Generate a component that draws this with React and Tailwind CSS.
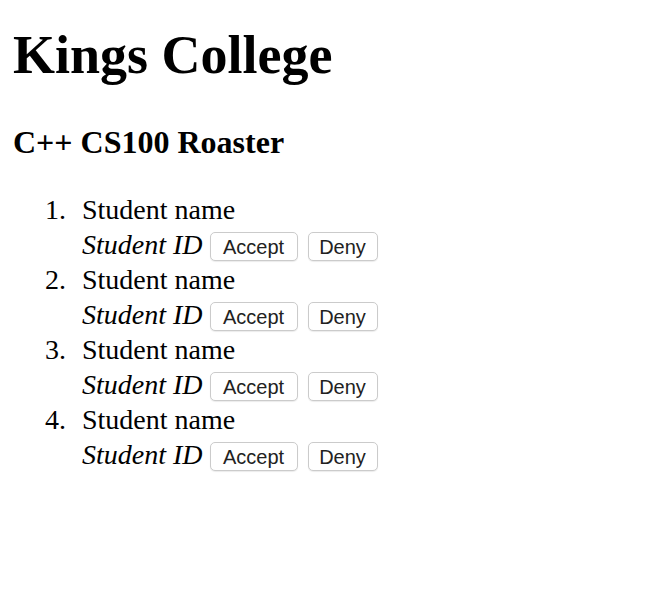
import React from 'react';

const students = [1, 2, 3, 4];

function RosterButton({ label, width }) {
  return (
    <button
      className={`h-[29px] ${width} rounded-[5px] border border-[#cbcbcb] bg-white text-[20px] leading-none text-[#222] font-['Liberation_Sans',Arial,sans-serif] shadow-[0_1px_1px_rgba(0,0,0,0.08)]`}
    >
      {label}
    </button>
  );
}

export default function App() {
  return (
    <div className="px-[13px] font-['Liberation_Serif','Times_New_Roman',serif] text-black bg-white min-h-[600px]">
      <h1 className="pt-[24px] text-[54px] font-bold leading-[62px]">Kings College</h1>
      <h2 className="mt-[38px] text-[32px] font-bold leading-[37px]">C++ CS100 Roaster</h2>

      <ol className="mt-[31px]">
        {students.map((n) => (
          <li key={n} className="flex text-[28px] leading-[35px]">
            <span className="w-[53px] text-right">{n}.</span>
            <div className="ml-[16px]">
              <div className="h-[35px]">Student name</div>
              <div className="h-[35px] flex items-center">
                <i className="leading-[35px]">Student ID</i>
                <div className="ml-[7px] flex gap-[10px] translate-y-[2px]">
                  <RosterButton label="Accept" width="w-[88px]" />
                  <RosterButton label="Deny" width="w-[70px]" />
                </div>
              </div>
            </div>
          </li>
        ))}
      </ol>
    </div>
  );
}
